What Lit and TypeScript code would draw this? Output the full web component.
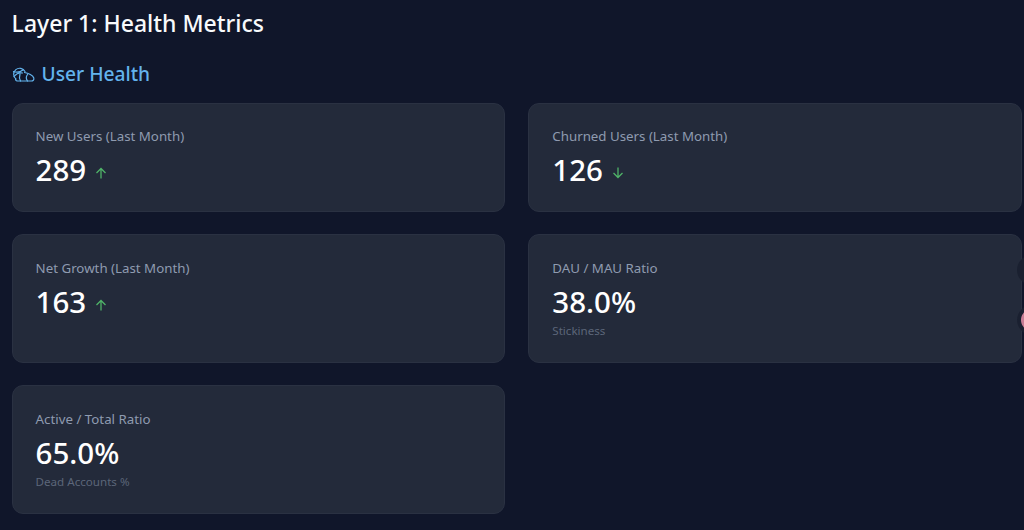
import { LitElement, css, html, nothing } from 'lit';
import { customElement } from 'lit/decorators.js';

type Trend = 'up' | 'down';

interface Metric {
  label: string;
  value: string;
  trend?: Trend;
  note?: string;
}

const METRICS: Metric[] = [
  { label: 'New Users (Last Month)', value: '289', trend: 'up' },
  { label: 'Churned Users (Last Month)', value: '126', trend: 'down' },
  { label: 'Net Growth (Last Month)', value: '163', trend: 'up' },
  { label: 'DAU / MAU Ratio', value: '38.0%', note: 'Stickiness' },
  { label: 'Active / Total Ratio', value: '65.0%', note: 'Dead Accounts %' },
];

@customElement('app-root')
export class AppRoot extends LitElement {
  private renderTrend(trend: Trend) {
    const d = trend === 'up' ? 'M6 11.500V1.500M1.500 6l4.500-4.500L10.500 6' : 'M6 .5v10M1.500 6l4.500 4.500L10.500 6';
    return html`
      <svg class="trend" width="12" height="12" viewBox="0 0 12 12" fill="none" stroke="currentColor" stroke-width="1.300">
        <path d=${d}></path>
      </svg>
    `;
  }

  private renderCard(m: Metric) {
    return html`
      <div class="card">
        <div class="label">${m.label}</div>
        <div class="value-row">
          <span class="value">${m.value}</span>
          ${m.trend ? this.renderTrend(m.trend) : nothing}
        </div>
        ${m.note ? html`<div class="note">${m.note}</div>` : nothing}
      </div>
    `;
  }

  render() {
    return html`
      <h1>Layer 1: Health Metrics</h1>
      <h2>
        <svg width="23" height="18" viewBox="0 0 23 18" fill="none" stroke="currentColor" stroke-width="1.200" stroke-linecap="round">
          <path d="M13 5.500A6 6 0 1 0 4 13"></path>
          <path d="M1.500 5.500c3 1.200 6.500.8 9.500-1.500M2 10.500c2-2.500 5-4 8.500-3.500"></path>
          <path d="M12.500 6.500c4 .5 8.500 3 9.300 5.500.4 2-.8 3-2.500 3H6c-1.500 0-2.500-.8-2.500-1.800"></path>
          <path d="M15.500 8.500c-1.500 2-1.500 4.500 0 6.500M8 8c-.8 2.500-.6 5 .5 7"></path>
        </svg>
        User Health
      </h2>
      <div class="grid">${METRICS.map((m) => this.renderCard(m))}</div>
      <span class="blob one"></span>
      <span class="blob two"></span>
    `;
  }

  static styles = css`
    :host {
      display: block;
      position: relative;
      height: 530px;
      overflow: hidden;
      box-sizing: border-box;
      padding: 0 2px 0 11.600px;
      background: #10162a;
      color: #fff;
      font-family: 'Noto Sans', 'Open Sans', sans-serif;
    }

    h1 {
      margin: 0;
      padding-top: 5px;
      font-size: 23px;
      line-height: 36px;
      font-weight: 500;
      color: #f8fafc;
    }

    h2 {
      display: flex;
      align-items: center;
      gap: 7px;
      margin: 15px 0 0;
      height: 34px;
      font-size: 19.200px;
      font-weight: 500;
      color: #63b3ed;
    }

    h2 svg {
      margin-top: 3px;
    }

    .grid {
      display: grid;
      grid-template-columns: 1fr 1fr;
      grid-template-rows: 109px 129px 129px;
      gap: 22px 23px;
      margin-top: 13px;
    }

    .card {
      box-sizing: border-box;
      padding: 22px 23px;
      background: #232a3a;
      border: 1px solid #2a3142;
      border-radius: 11px;
    }

    .card:nth-child(n + 3) {
      padding-top: 23px;
    }

    .label {
      font-size: 13.300px;
      line-height: 20px;
      color: #8f9bb0;
    }

    .value-row {
      display: flex;
      align-items: center;
      gap: 9px;
      margin-top: 3px;
    }

    .value {
      font-size: 29.500px;
      line-height: 42px;
      font-weight: 500;
      color: #fff;
    }

    .trend {
      margin-top: 5px;
      color: #4fb368;
    }

    .note {
      font-size: 11.600px;
      line-height: 16px;
      color: #5c6679;
    }

    .blob {
      position: absolute;
      left: 1017px;
      width: 30px;
      height: 30px;
      border-radius: 50%;
      background: #1a2030;
    }

    .blob.one {
      top: 255px;
    }

    .blob.two {
      top: 305px;
      background: radial-gradient(circle at center, #c77d95 10.500px, #1a2030 11.500px);
    }
  `;
}
